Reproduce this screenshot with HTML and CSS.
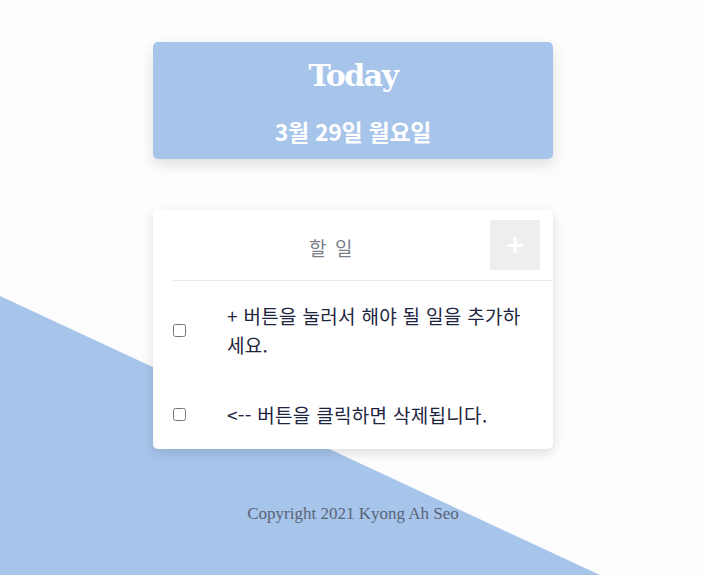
FILE: index.html
```html
<!DOCTYPE html>
<html lang="ko">
<head>
<meta charset="utf-8">
<title>Today</title>
<link rel="stylesheet" href="styles.css">
</head>
<body>
<div class="bg-slant"></div>
<main class="wrap">
  <section class="today-card">
    <h1 class="today-title">Today</h1>
    <p class="today-date">3월 29일 월요일</p>
  </section>
  <section class="todo-card">
    <div class="todo-head">
      <h2 class="todo-title">할 일</h2>
      <button class="add-btn" type="button">+</button>
    </div>
    <ul class="todo-list">
      <li class="todo-item">
        <input type="checkbox" class="todo-check">
        <span class="todo-text">+ 버튼을 눌러서 해야 될 일을 추가하세요.</span>
      </li>
      <li class="todo-item">
        <input type="checkbox" class="todo-check">
        <span class="todo-text">&lt;-- 버튼을 클릭하면 삭제됩니다.</span>
      </li>
    </ul>
  </section>
  <footer class="copy">Copyright 2021 Kyong Ah Seo</footer>
</main>
</body>
</html>
```

FILE: styles.css
```css
html, body {
  margin: 0;
  padding: 0;
}
body {
  background: #fdfdfd;
  min-height: 575px;
  font-family: "Noto Sans CJK KR", "Noto Sans", sans-serif;
  position: relative;
  overflow: hidden;
}
.bg-slant {
  position: absolute;
  left: 0;
  top: 0;
  width: 703px;
  height: 575px;
  background: #a7c5eb;
  clip-path: polygon(0 296px, 600px 575px, 0 575px);
  z-index: 0;
}
.wrap {
  position: relative;
  z-index: 1;
  width: 400px;
  margin: 0 auto;
  padding: 42px 0 0 3px;
}
.today-card {
  background: #a7c5eb;
  border-radius: 5px;
  box-shadow: 0 6px 14px rgba(0, 0, 0, 0.12);
  height: 117px;
  display: flex;
  flex-direction: column;
  align-items: center;
  color: #fff;
}
.today-title {
  margin: 13px 0 0;
  font-family: "DejaVu Serif", "Liberation Serif", serif;
  font-weight: bold;
  font-size: 30px;
  line-height: 42px;
  letter-spacing: -1.5px;
}
.today-date {
  margin: 17px 0 0;
  font-size: 23px;
  font-weight: bold;
  line-height: 34px;
  letter-spacing: -0.3px;
}
.todo-card {
  margin-top: 51px;
  background: #fff;
  border-radius: 5px;
  box-shadow: 0 4px 12px rgba(0, 0, 0, 0.13);
}
.todo-head {
  display: flex;
  align-items: center;
  height: 70px;
  padding: 0 13px 0 20px;
}
.todo-title {
  flex: 1;
  margin: 0;
  text-align: center;
  font-weight: normal;
  font-size: 19px;
  color: #7a7f88;
  letter-spacing: 1.5px;
  position: relative;
  top: 2px;
}
.add-btn {
  width: 50px;
  height: 50px;
  border: none;
  background: #eeeeee;
  color: #fff;
  font-size: 24px;
  font-weight: bold;
  line-height: 50px;
  padding: 0;
  font-family: "DejaVu Sans", sans-serif;
}
.todo-list {
  list-style: none;
  margin: 0 0 0 20px;
  padding: 0;
  border-top: 1px solid #f1e4ea;
}
.todo-item {
  display: flex;
  align-items: center;
  padding: 21px 20px 20px 0;
}
.todo-check {
  margin: 0;
  width: 13px;
  height: 13px;
  flex: none;
}
.todo-text {
  margin-left: 41px;
  font-size: 19px;
  line-height: 28.8px;
  letter-spacing: 0.3px;
  color: #1d2540;
}
.copy {
  margin-top: 55px;
  text-align: center;
  font-family: "Liberation Serif", "DejaVu Serif", serif;
  font-size: 17px;
  color: #5a6478;
}
```
